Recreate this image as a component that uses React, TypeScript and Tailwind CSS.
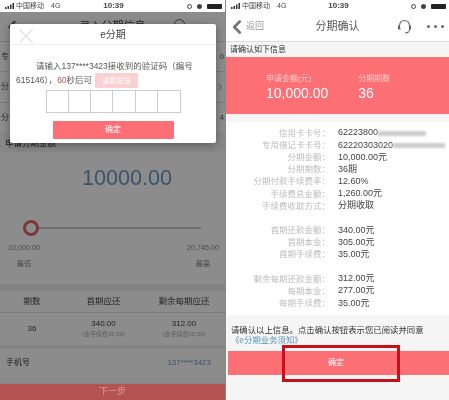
import React from 'react';
import { ChevronLeft, ChevronRight, X } from 'lucide-react';

const font = 'font-["Liberation_Sans","Noto_Sans_CJK_SC",sans-serif]';

function StatusBar() {
  return (
    <div className="flex h-[12px] items-center justify-between bg-white pl-[5px] pr-[3px] text-[7px] text-[#444]">
      <div className="flex w-[80px] items-center gap-[2px]">
        <svg width="9" height="6" viewBox="0 0 9 6" fill="#333">
          <rect x="0" y="4" width="1.500" height="2" />
          <rect x="2.500" y="3" width="1.500" height="3" />
          <rect x="5" y="1.500" width="1.500" height="4.500" />
          <rect x="7.500" y="0" width="1.500" height="6" />
        </svg>
        <span>中国移动</span>
        <span className="ml-[5px]">4G</span>
      </div>
      <span className="text-[8px] font-bold">10:39</span>
      <div className="flex w-[80px] items-center justify-end gap-[5px]">
        <span className="h-[5px] w-[5px] rounded-full border border-[#444]" />
        <span className="h-[5px] w-[5px] rounded-full bg-[#444]" />
        <span className="h-[5px] w-[15px] rounded-[1px] bg-[#222]" />
      </div>
    </div>
  );
}

function LoanPage() {
  return (
    <div className="flex h-full flex-col bg-[#f7f7f7]">
      <StatusBar />
      <div className="relative flex h-[30px] items-center justify-center border-b border-[#ddd] bg-white text-[11px] text-[#444]">
        <ChevronLeft className="absolute left-[2px] h-[20px] w-[20px] text-[#777]" strokeWidth={3} />
        录入分期信息
        <span className="absolute left-[174px] top-[7px] h-[11px] w-[11px] rounded-full border border-[#666]" />
      </div>
      <div className="flex h-[30px] items-center justify-between border-b border-[#ddd] bg-white px-[1px] text-[8px] text-[#555]">
        <span>专</span>
        <span>0</span>
      </div>
      <div className="flex h-[31px] items-center justify-between border-b border-[#ddd] bg-white pl-[1px] text-[8px] text-[#555]">
        <span>分</span>
        <ChevronRight className="h-[10px] w-[10px] text-[#777]" />
      </div>
      <div className="flex h-[30px] items-center justify-between bg-white px-[1px] text-[8px] text-[#555]">
        <span>分</span>
        <span>4</span>
      </div>
      <div className="flex h-[19px] items-center px-[5px] pt-[1px] text-[8.500px] text-[#333]">申请分期金额</div>
      <div className="flex h-[52px] items-center justify-center bg-white pl-[29px] text-[21.600px] text-[#6e97c4]">10000.00</div>
      <div className="bg-white pl-[8px] pr-[6px]">
        <div className="mt-[16px] flex items-center pl-[15px] pr-[18px]">
          <span className="h-[16px] w-[16px] shrink-0 rounded-full border-[3px] border-[#e2656b]" />
          <span className="h-[2px] flex-1 bg-[#ccc]" />
        </div>
        <div className="mt-[7px] flex justify-between text-[7.200px] text-[#888]">
          <div className="flex flex-col items-center gap-[5px]">
            <span>10,000.00</span>
            <span>最低</span>
          </div>
          <div className="flex flex-col items-center gap-[5px]">
            <span>20,745.00</span>
            <span>最高</span>
          </div>
        </div>
        <div className="h-[14px]" />
      </div>
      <div className="h-[7px] bg-[#eeeeee]" />
      <div className="grid h-[22px] grid-cols-[64px_1fr_82px] items-center border-b border-[#ddd] bg-white text-center text-[8.500px] text-[#444]">
        <span>期数</span>
        <span>首期应还</span>
        <span>剩余每期应还</span>
      </div>
      <div className="grid h-[32px] grid-cols-[64px_1fr_82px] items-center bg-white text-center text-[8px] text-[#444]">
        <span>36</span>
        <div className="flex flex-col leading-[10px]">
          <span>340.00</span>
          <span className="text-[6px] text-[#aaa]">(含手续费35.00)</span>
        </div>
        <div className="flex flex-col leading-[10px]">
          <span>312.00</span>
          <span className="text-[6px] text-[#aaa]">(含手续费35.00)</span>
        </div>
      </div>
      <div className="h-[4px] bg-[#eeeeee]" />
      <div className="flex h-[29px] items-center justify-between bg-white px-[6px] text-[8px] text-[#333]">
        <span>手机号</span>
        <span className="pr-[8px] text-[#6e97c4]">137****3423</span>
      </div>
      <div className="h-[6px]" />
      <div className="relative z-10 flex flex-1 items-center justify-center bg-[#b55353] px-[2px] text-[9px] text-[#d99]">下一步</div>
    </div>
  );
}

function CodeDialog() {
  return (
    <div className="absolute left-[10px] top-[24px] z-20 w-[206px] rounded-[2px] bg-white shadow-[0_2px_8px_rgba(0,0,0,0.35)]">
      <div className="relative flex h-[21px] items-center justify-center border-b border-[#eee] text-[10px] text-[#444]">
        <X className="absolute left-[3px] top-[-1px] h-[26px] w-[26px] text-[#e2e2e2]" strokeWidth={1} />
        e分期
      </div>
      <div className="px-[6px] pt-[15px] text-[8.500px] leading-[13px] text-[#555]">
        <p className="indent-[20px] whitespace-nowrap">请输入137****3423接收到的验证码（编号</p>
        <div className="flex items-center whitespace-nowrap">
          <span>615146），</span>
          <span className="text-[#c0505a]">60</span>
          <span>秒后可</span>
          <span className="ml-[3px] flex h-[15px] w-[43px] items-center justify-center bg-[#fbd0d3] text-[7px] text-white">重新发送</span>
        </div>
      </div>
      <div className="mx-auto mt-[2px] flex h-[23px] w-[135px] border border-[#ccc]">
        {[0, 1, 2, 3, 4, 5].map((i) => (
          <span key={i} className="flex-1 border-r border-[#ccc] last:border-r-0" />
        ))}
      </div>
      <div className="mx-auto mb-[4px] mt-[8px] flex h-[18px] w-[121px] items-center justify-center rounded-[1px] bg-[#fb6f75] text-[8px] text-white">
        确定
      </div>
    </div>
  );
}

type Row = { label: string; value: string; mask?: string };

const groups: Row[][] = [
  [
    { label: '信用卡卡号：', value: '62223800', mask: 'w-[48px]' },
    { label: '专用借记卡卡号：', value: '62220303020', mask: 'w-[52px]' },
    { label: '分期金额：', value: '10,000.00元' },
    { label: '分期期数：', value: '36期' },
    { label: '分期付款手续费率：', value: '12.60%' },
    { label: '手续费总金额：', value: '1,260.00元' },
    { label: '手续费收取方式：', value: '分期收取' },
  ],
  [
    { label: '首期还款金额：', value: '340.00元' },
    { label: '首期本金：', value: '305.00元' },
    { label: '首期手续费：', value: '35.00元' },
  ],
  [
    { label: '剩余每期还款金额：', value: '312.00元' },
    { label: '每期本金：', value: '277.00元' },
    { label: '每期手续费：', value: '35.00元' },
  ],
];

function ConfirmPage() {
  return (
    <div className="relative flex h-full flex-col border-l border-[#888] bg-[#f5f5f5]">
      <StatusBar />
      <div className="relative flex h-[29px] items-center justify-center bg-white text-[11px] text-[#555]">
        <div className="absolute left-[0px] flex items-center text-[9px] text-[#999]">
          <ChevronLeft className="h-[22px] w-[22px] text-[#777]" strokeWidth={3} />
          <span className="-ml-[2px]">返回</span>
        </div>
        分期确认
        <svg className="absolute left-[171px] top-[7px]" width="15" height="16" viewBox="0 0 15 16" fill="none" stroke="#666" strokeWidth="1.100">
          <path d="M2.500 9V6.500a5 5 0 0 1 10 0V12" />
          <path d="M2 7h-0.500v3H3zM12.500 7H13.500v3H12.500z" />
          <path d="M12 12.500c-1 1-2.500 1.500-4 1.500" />
        </svg>
        <div className="absolute right-[5px] flex gap-[4px]">
          <span className="h-[3px] w-[3px] rounded-full bg-[#666]" />
          <span className="h-[3px] w-[3px] rounded-full bg-[#666]" />
          <span className="h-[3px] w-[3px] rounded-full bg-[#666]" />
        </div>
      </div>
      <div className="flex h-[16px] items-center border-t border-[#ddd] px-[4px] text-[8px] text-[#333]">请确认如下信息</div>
      <div className="flex h-[57px] items-center gap-[30px] bg-[#fb6f75] pl-[40px] pt-[2px] text-white">
        <div className="flex flex-col gap-[1px]">
          <span className="text-[8px] text-[#fcc]">申请金额(元)</span>
          <span className="text-[14px] leading-[15px]">10,000.00</span>
        </div>
        <div className="flex flex-col gap-[1px]">
          <span className="text-[8px] text-[#fcc]">分期期数</span>
          <span className="text-[14px] leading-[15px]">36</span>
        </div>
      </div>
      <div className="mt-[8px] flex flex-col gap-[12px] bg-white pb-[6px] pt-[5px]">
        {groups.map((rows, g) => (
          <div key={g} className="flex flex-col">
            {rows.map((r) => (
              <div key={r.label} className="flex h-[12.200px] items-center">
                <span className="w-[104px] whitespace-nowrap text-right text-[8.500px] text-[#bbb]">{r.label}</span>
                <span className="ml-[8px] text-[9px] text-[#444]">{r.value}</span>
                {r.mask && <span className={`h-[5px] ${r.mask} bg-[#ccc] blur-[1px]`} />}
              </div>
            ))}
          </div>
        ))}
      </div>
      <div className="px-[5px] pt-[10px] text-[8.400px] leading-[10px] text-[#333]">
        <p className="whitespace-nowrap">请确认以上信息。点击确认按钮表示您已阅读并同意</p>
        <p className="text-[#5a93b5]">《e分期业务须知》</p>
      </div>
      <div className="ml-[2px] mt-[6px] flex h-[24px] items-center justify-center bg-[#fb6f75] pr-[5px] text-[8px] text-white">确定</div>
      <div className="absolute left-[56px] top-[345px] h-[37px] w-[118px] border-[3px] border-[#c8101c]" />
    </div>
  );
}

export default function App() {
  return (
    <div className={`grid h-[400px] w-[449px] grid-cols-[225px_224px] overflow-hidden bg-white ${font} blur-[0.5px]`}>
      <div className="relative h-[400px] overflow-hidden">
        <LoanPage />
        <div className="absolute inset-x-0 bottom-0 top-[12px] bg-black/45" />
        <CodeDialog />
      </div>
      <div className="h-[400px] overflow-hidden">
        <ConfirmPage />
      </div>
    </div>
  );
}
